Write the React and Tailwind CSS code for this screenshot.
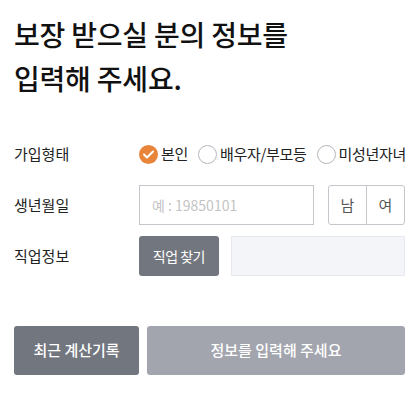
import React, { useState } from 'react';

const font = { fontFamily: '"Noto Sans CJK KR", "Noto Sans", sans-serif' };

function Radio({ checked, label, onClick }) {
  return (
    <button type="button" onClick={onClick} className="flex shrink-0 items-center gap-[3px]">
      {checked ? (
        <span className="flex h-[19px] w-[19px] items-center justify-center rounded-full bg-[#e8853a]">
          <svg width="11" height="9" viewBox="0 0 11 9" fill="none">
            <path d="M1 4.5L4 7.5L10 1.5" stroke="#fff" strokeWidth="2" strokeLinecap="round" strokeLinejoin="round" />
          </svg>
        </span>
      ) : (
        <span className="h-[19px] w-[19px] rounded-full border border-[#b3b7bd] bg-white" />
      )}
      <span className="whitespace-nowrap text-[15px] tracking-[-0.3px] text-[#222]">{label}</span>
    </button>
  );
}

export default function App() {
  const [type, setType] = useState('self');
  const [gender, setGender] = useState(null);

  return (
    <div className="w-[418px] h-[400px] bg-white pl-[14px] pr-[13px] pt-[12px]" style={font}>
      {/* Title */}
      <h1 className="text-[28px] font-medium leading-[44px] tracking-[-0.2px] text-[#111]">
        보장 받으실 분의 정보를
        <br />
        입력해 주세요.
      </h1>

      {/* Form rows */}
      <div className="mt-[34px] flex flex-col gap-[11px]">
        <div className="flex h-[40px] items-center">
          <div className="w-[125px] shrink-0 text-[15px] text-[#222]">가입형태</div>
          <div className="flex items-center gap-[10px]">
            <Radio checked={type === 'self'} label="본인" onClick={() => setType('self')} />
            <Radio checked={type === 'family'} label="배우자/부모등" onClick={() => setType('family')} />
            <Radio checked={type === 'minor'} label="미성년자녀" onClick={() => setType('minor')} />
          </div>
        </div>

        <div className="flex h-[40px] items-center">
          <div className="w-[125px] shrink-0 text-[15px] text-[#222]">생년월일</div>
          <input
            className="h-[40px] w-[175px] border border-[#c3c7cc] px-[12px] text-[14px] text-[#222] outline-none placeholder:text-[#c4c4c4]"
            placeholder="예 : 19850101"
          />
          <div className="ml-[14px] flex h-[40px] w-[77px] overflow-hidden rounded-[3px] border border-[#c3c7cc]">
            <button
              type="button"
              onClick={() => setGender('m')}
              className="flex-1 border-r border-[#c3c7cc] text-[15px] text-[#555]"
            >
              남
            </button>
            <button type="button" onClick={() => setGender('f')} className="flex-1 text-[15px] text-[#555]">
              여
            </button>
          </div>
        </div>

        <div className="flex h-[40px] items-center">
          <div className="w-[125px] shrink-0 text-[15px] text-[#222]">직업정보</div>
          <button
            type="button"
            className="h-[40px] w-[80px] rounded-[3px] bg-[#72767f] text-[14px] tracking-[-0.5px] text-white"
          >
            직업 찾기
          </button>
          <div className="ml-[12px] h-[40px] w-[175px] border border-[#e6e9ef] bg-[#f3f5f9]" />
        </div>
      </div>

      {/* Bottom buttons */}
      <div className="mt-[50px] flex gap-[8px]">
        <button
          type="button"
          className="h-[49px] w-[125px] rounded-[3px] bg-[#72767f] text-[15px] font-medium text-white"
        >
          최근 계산기록
        </button>
        <button
          type="button"
          className="h-[49px] flex-1 rounded-[3px] bg-[#a3a5ae] text-[15px] font-medium text-white"
        >
          정보를 입력해 주세요
        </button>
      </div>
    </div>
  );
}
